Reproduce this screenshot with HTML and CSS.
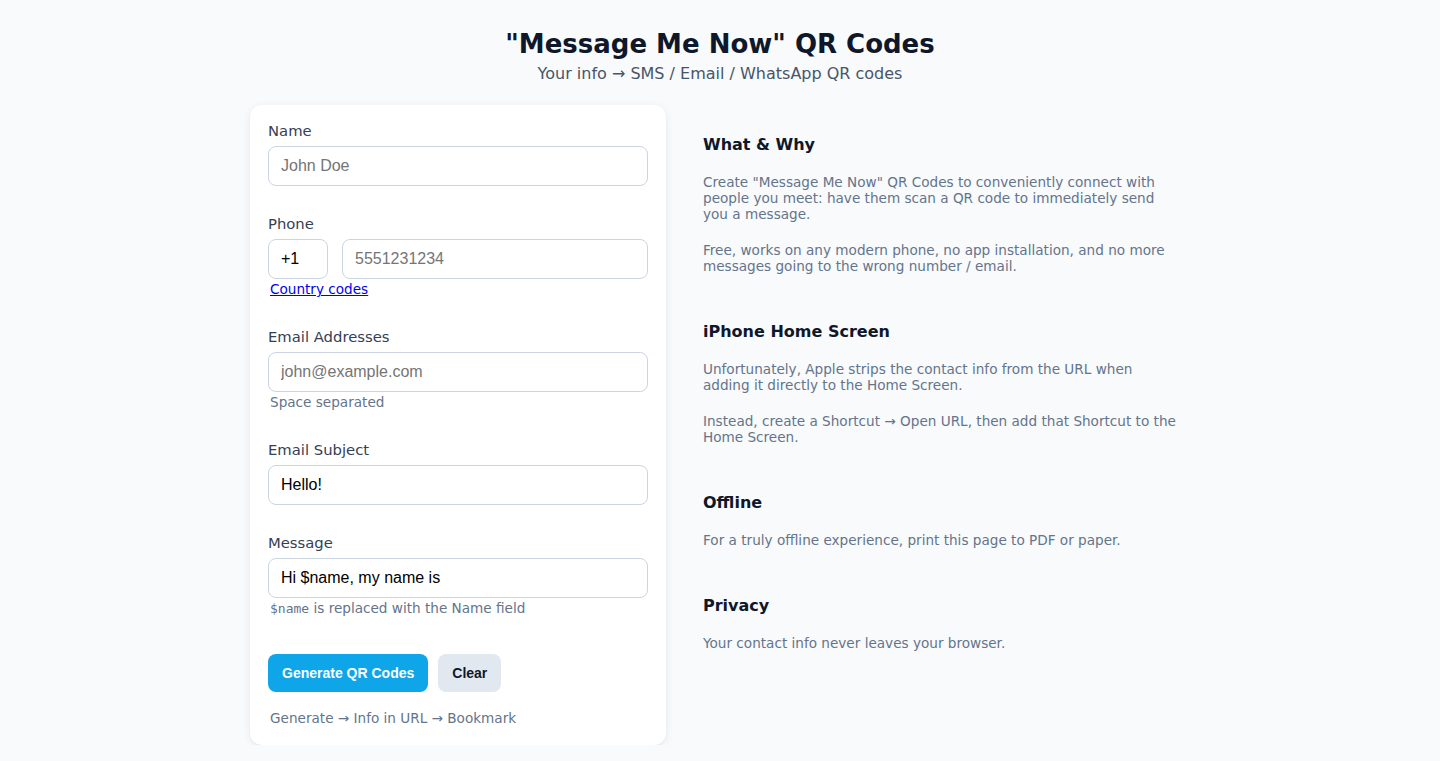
FILE: index.html
```html
<!DOCTYPE html>
<html lang="en">
<head>
<meta charset="utf-8">
<title>"Message Me Now" QR Codes</title>
<link rel="stylesheet" href="styles.css">
</head>
<body>
<header class="page-header">
  <h1 class="title">"Message Me Now" QR Codes</h1>
  <p class="subtitle">Your info → SMS / Email / WhatsApp QR codes</p>
</header>
<main class="layout">
  <form class="card">
    <div class="field">
      <label class="label" for="name">Name</label>
      <input class="input" id="name" type="text" placeholder="John Doe">
    </div>
    <div class="field">
      <label class="label" for="phone">Phone</label>
      <div class="phone-row">
        <input class="input cc" type="text" value="+1">
        <input class="input grow" id="phone" type="text" placeholder="5551231234">
      </div>
      <div class="helper"><a class="link" href="#">Country codes</a></div>
    </div>
    <div class="field">
      <label class="label" for="email">Email Addresses</label>
      <input class="input" id="email" type="text" placeholder="john@example.com">
      <div class="helper">Space separated</div>
    </div>
    <div class="field">
      <label class="label" for="subject">Email Subject</label>
      <input class="input" id="subject" type="text" value="Hello!">
    </div>
    <div class="field">
      <label class="label" for="message">Message</label>
      <input class="input" id="message" type="text" value="Hi $name, my name is">
      <div class="helper"><code class="code">$name</code> is replaced with the Name field</div>
    </div>
    <div class="actions">
      <button class="btn btn-primary" type="button">Generate QR Codes</button>
      <button class="btn btn-secondary" type="button">Clear</button>
    </div>
    <div class="footnote">Generate → Info in URL → Bookmark</div>
  </form>
  <aside class="info">
    <section class="section">
      <h3 class="heading">What &amp; Why</h3>
      <p class="para">Create "Message Me Now" QR Codes to conveniently connect with people you meet: have them scan a QR code to immediately send you a message.</p>
      <p class="para">Free, works on any modern phone, no app installation, and no more messages going to the wrong number / email.</p>
    </section>
    <section class="section">
      <h3 class="heading">iPhone Home Screen</h3>
      <p class="para">Unfortunately, Apple strips the contact info from the URL when adding it directly to the Home Screen.</p>
      <p class="para">Instead, create a Shortcut → Open URL, then add that Shortcut to the Home Screen.</p>
    </section>
    <section class="section">
      <h3 class="heading">Offline</h3>
      <p class="para">For a truly offline experience, print this page to PDF or paper.</p>
    </section>
    <section class="section">
      <h3 class="heading">Privacy</h3>
      <p class="para">Your contact info never leaves your browser.</p>
    </section>
  </aside>
</main>
</body>
</html>
```

FILE: styles.css
```css
* { box-sizing: border-box; }

html, body {
  margin: 0;
  padding: 0;
}

body {
  background: #f8fafc;
  font-family: "DejaVu Sans", sans-serif;
  color: #0f172a;
}

.page-header {
  text-align: center;
  padding-top: 28px;
}

.title {
  margin: 0;
  font-size: 26px;
  line-height: 32px;
  font-weight: bold;
  color: #0f172a;
}

.subtitle {
  margin: 4px 0 0;
  font-size: 16px;
  line-height: 20px;
  color: #475569;
}

.layout {
  width: 940px;
  margin: 21px auto 0;
  display: grid;
  grid-template-columns: 416px 1fr;
  column-gap: 37px;
  align-items: start;
}

.card {
  background: #ffffff;
  border-radius: 12px;
  box-shadow: 0 2px 10px rgba(15, 23, 42, 0.07), 0 1px 2px rgba(15, 23, 42, 0.04);
  padding: 17px 18px 17px;
}

.field {
  margin-bottom: 29px;
}

.label {
  display: block;
  font-size: 14.8px;
  line-height: 18px;
  color: #334155;
  margin-bottom: 6px;
}

.input {
  display: block;
  width: 100%;
  height: 40px;
  border: 1px solid #cbd5e1;
  border-radius: 8px;
  background: #ffffff;
  padding: 0 12px;
  font-family: "Liberation Sans", Arial, sans-serif;
  font-size: 16px;
  color: #000000;
  outline: none;
}

.input::placeholder {
  color: #757575;
}

.phone-row {
  display: flex;
  gap: 14px;
}

.cc {
  width: 60px;
  flex: none;
}

.grow {
  flex: 1;
  width: auto;
  min-width: 0;
}

.helper {
  font-size: 13.6px;
  line-height: 20px;
  color: #64748b;
  padding-left: 2px;
}

.link {
  color: #0000ee;
  text-decoration: underline;
  font-size: 13.6px;
}

.code {
  font-family: "DejaVu Sans Mono", monospace;
  font-size: 13px;
}

.actions {
  display: flex;
  gap: 10px;
  margin-top: 35px;
}

.btn {
  height: 38px;
  padding: 0 14px;
  border: none;
  border-radius: 8px;
  font-family: "Liberation Sans", Arial, sans-serif;
  font-size: 14px;
  font-weight: bold;
  cursor: pointer;
}

.btn-primary {
  background: #0ea5e9;
  color: #ffffff;
}

.btn-secondary {
  background: #e2e8f0;
  color: #0f172a;
}

.footnote {
  margin-top: 16px;
  font-size: 13.6px;
  line-height: 20px;
  color: #64748b;
  padding-left: 2px;
}

.info {
  padding-top: 30px;
  padding-right: 13px;
}

.section {
  margin-bottom: 48px;
}

.heading {
  margin: 0 0 19px;
  font-size: 16px;
  line-height: 20px;
  font-weight: bold;
  color: #0f172a;
}

.para {
  margin: 0 0 20px;
  font-size: 13.6px;
  line-height: 16px;
  color: #64748b;
}

.para:last-child {
  margin-bottom: 0;
}
```
